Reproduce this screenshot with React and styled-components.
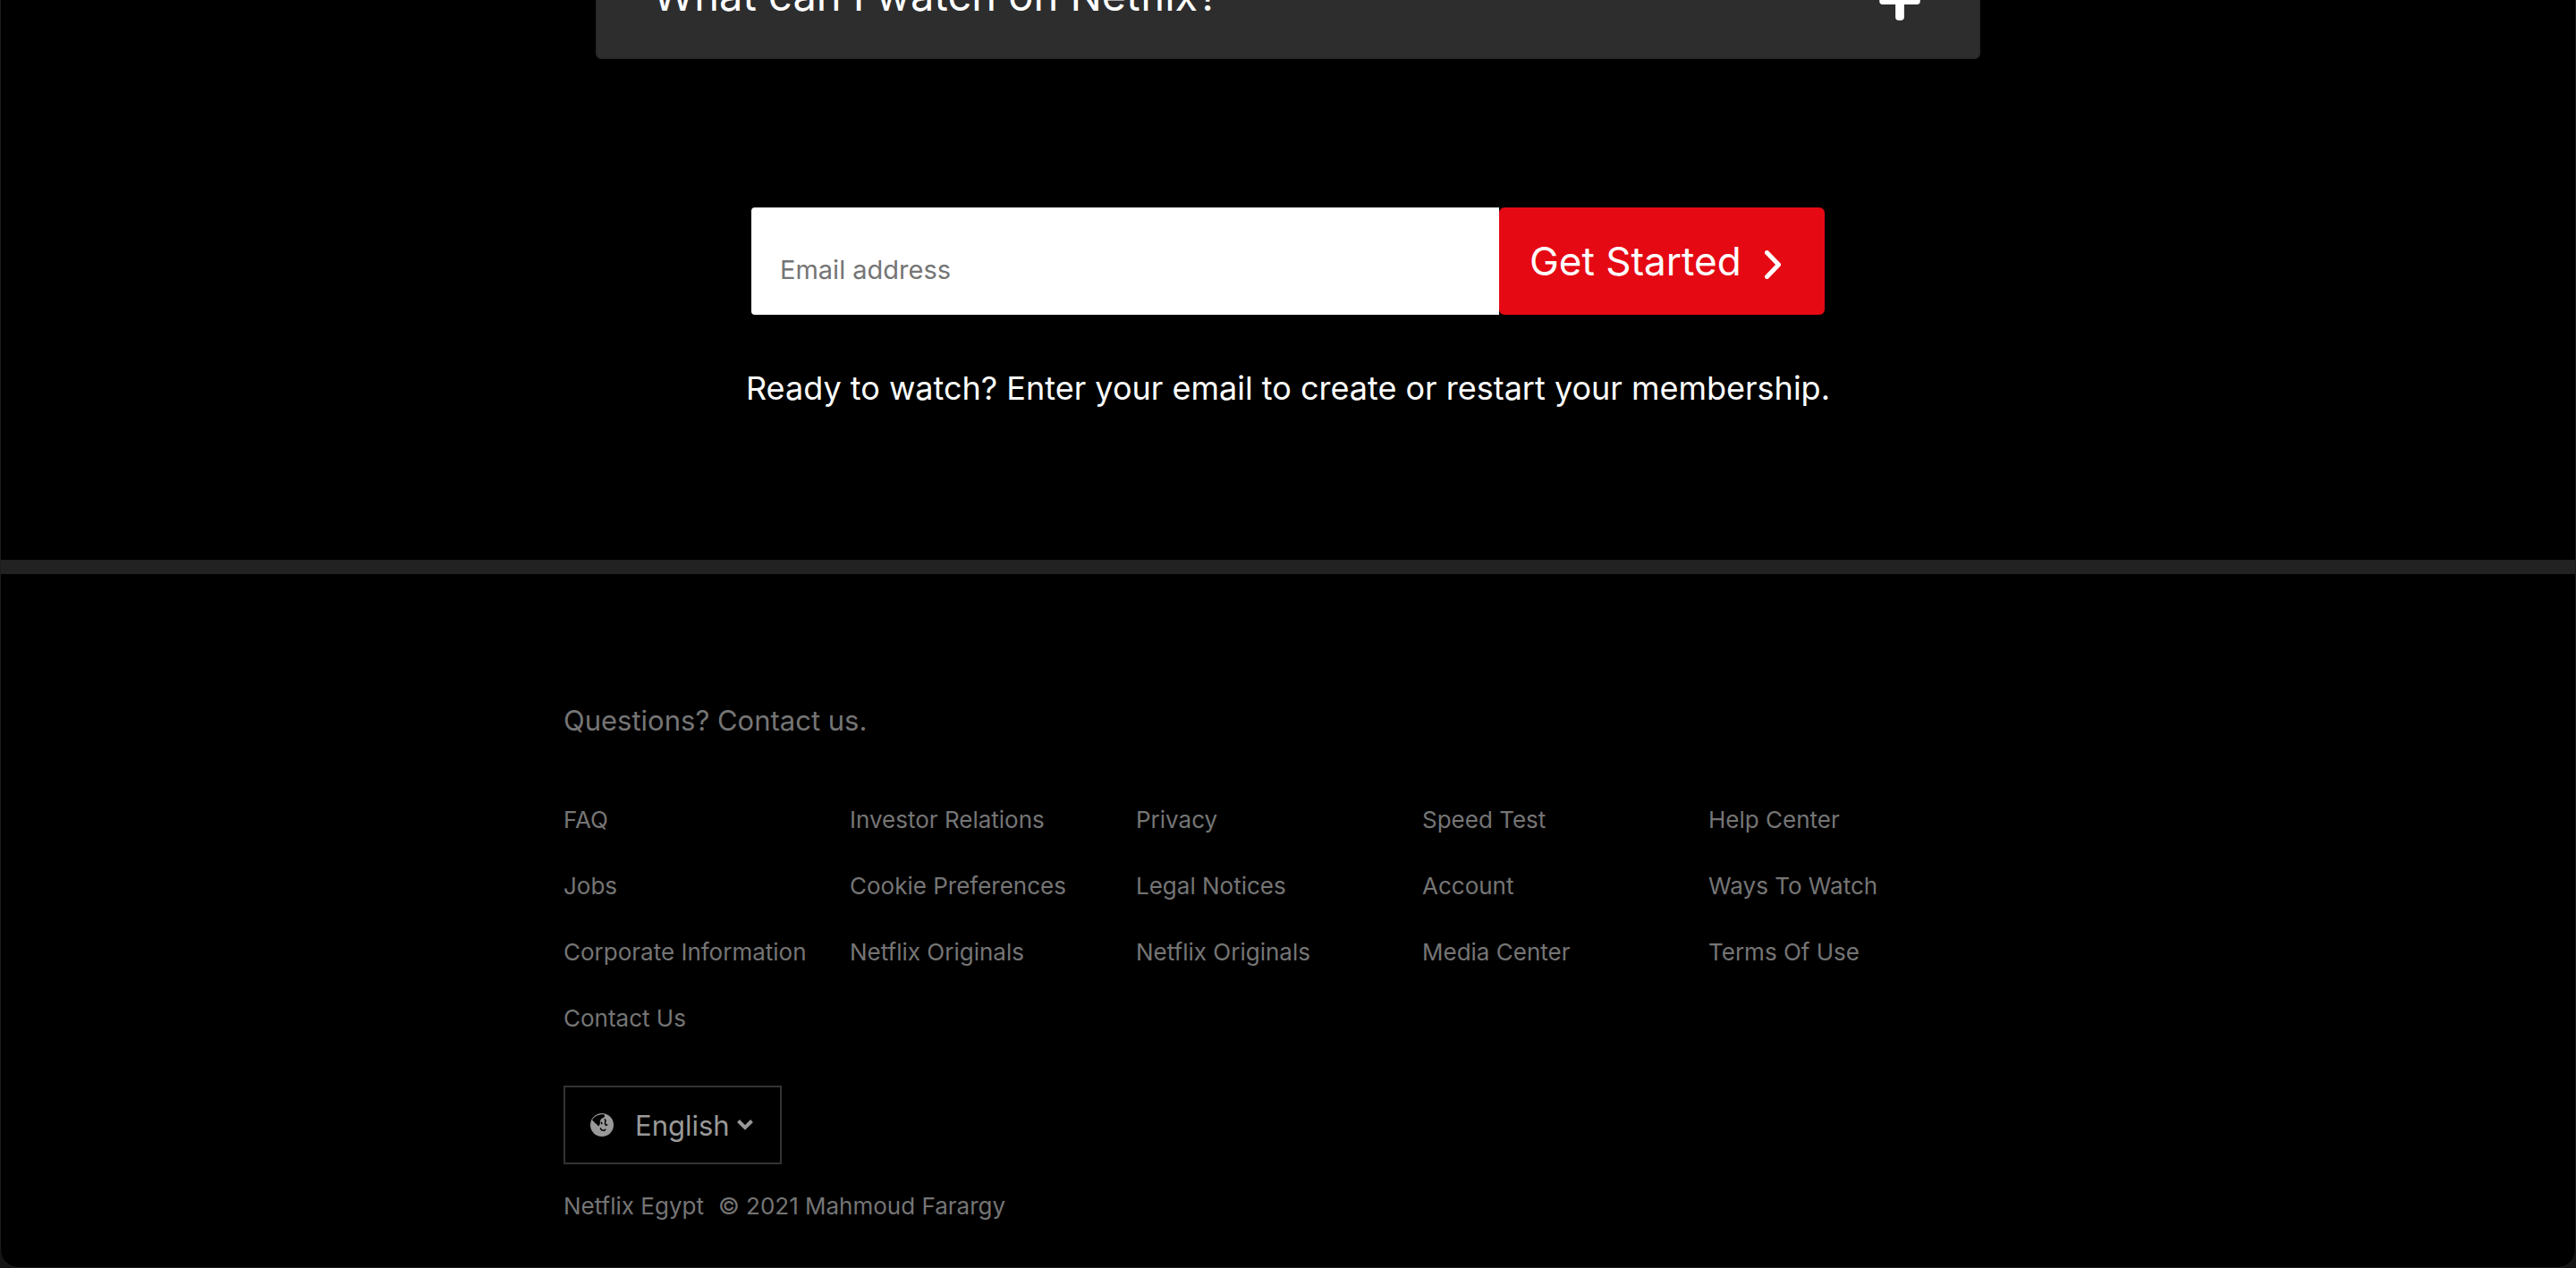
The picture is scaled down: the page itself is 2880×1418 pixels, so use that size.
import React from "react";
import styled, { createGlobalStyle } from "styled-components";
import { FaPlus } from "react-icons/fa";

const GlobalStyle = createGlobalStyle`
  *, *::before, *::after { box-sizing: border-box; }
  body {
    margin: 0;
    background: #141414;
    color: #fff;
    font-family: Inter, "Liberation Sans", sans-serif;
  }
`;

const Page = styled.div`
  min-height: 100vh;
  overflow: hidden;
  display: flex;
  flex-direction: column;
  background: #000;
  border: 1px solid #1c1c1c;
  border-top: 0;
  border-radius: 0 0 20px 20px;
`;

const FaqSection = styled.main`
  display: flex;
  flex-direction: column;
  align-items: center;
  justify-content: flex-end;
  height: 642px;
  padding-bottom: 166px;
  border-bottom: 16px solid #222;
`;

const Question = styled.button`
  flex: none;
  display: flex;
  align-items: center;
  justify-content: space-between;
  width: 1548px;
  max-width: 100%;
  height: 132px;
  margin-bottom: 166px;
  padding: 0 62px;
  border: 2px solid #292929;
  border-radius: 6px;
  background: #2d2d2d;
  color: #fff;
  font-family: inherit;
  font-size: 47px;
  line-height: 60px;
  text-align: left;
`;

const QuestionText = styled.span`
  padding-bottom: 10px;
`;

const SignUp = styled.form`
  width: 1200px;
  max-width: 100%;
  display: flex;
  flex-direction: column;
  align-items: center;
  gap: 56px;
`;

const Fields = styled.div`
  display: flex;
  width: 100%;
  height: 120px;
`;

const EmailInput = styled.input`
  flex: 1;
  min-width: 0;
  padding: 18px 32px 0;
  border: 0;
  border-radius: 4px 0 0 4px;
  background: #fff;
  color: #000;
  font-family: inherit;
  font-size: 29px;
  &::placeholder { color: #757575; opacity: 1; }
`;

const StartButton = styled.button`
  width: 364px;
  padding: 0 34px;
  border: 0;
  border-radius: 6px;
  background: #e50914;
  color: #fff;
  font-family: inherit;
  font-size: 44px;
  text-align: left;
  white-space: nowrap;

  svg {
    margin-left: 26px;
    vertical-align: middle;
  }
`;

const Prompt = styled.p`
  margin: 0;
  font-size: 36px;
  line-height: 52px;
  text-align: center;
  white-space: nowrap;
`;

const Footer = styled.footer`
  width: 1620px;
  max-width: 100%;
  margin: 0 auto;
  padding: 144px 0 40px;
  color: #757575;
  font-size: 26px;
  line-height: 34px;
`;

const ContactLine = styled.a`
  display: block;
  margin-bottom: 74px;
  color: inherit;
  font-size: 31px;
  line-height: 40px;
  text-decoration: none;
`;

const LinkGrid = styled.ul`
  display: grid;
  grid-template-columns: repeat(5, 320px);
  gap: 40px 0;
  margin: 0 0 58px;
  padding: 0;
  list-style: none;
`;

const FooterLink = styled.a`
  color: inherit;
  text-decoration: none;
`;

const Language = styled.label`
  display: flex;
  align-items: center;
  width: 244px;
  height: 88px;
  margin-bottom: 30px;
  padding: 0 30px 0 28px;
  border: 2px solid #333;
  color: #999;
`;

const LanguageSelect = styled.select`
  flex: 1;
  min-width: 0;
  height: 40px;
  padding: 0;
  margin-left: 24px;
  border: 0;
  appearance: none;
  background: transparent;
  color: inherit;
  font-family: inherit;
  font-size: 31px;
`;

const Copyright = styled.p`
  display: flex;
  gap: 16px;
  margin: 0;
`;

const links = [
  "FAQ", "Investor Relations", "Privacy", "Speed Test", "Help Center",
  "Jobs", "Cookie Preferences", "Legal Notices", "Account", "Ways To Watch",
  "Corporate Information", "Netflix Originals", "Netflix Originals", "Media Center", "Terms Of Use",
  "Contact Us",
];

const Chevron = () => (
  <svg width="18" height="32" viewBox="0 0 18 32" fill="none" stroke="currentColor" strokeWidth="5" strokeLinecap="round" strokeLinejoin="round" aria-hidden="true">
    <path d="M2.5 2.5 15.5 16 2.5 29.5" />
  </svg>
);

const Globe = () => (
  <svg width="26" height="26" viewBox="0 0 26 26" fill="none" aria-hidden="true">
    <circle cx="13" cy="13" r="13" fill="#999" />
    <path d="M2 7.6C4.2 3.6 8.6 1 15.6 1.3L16 3.4 15.4 4.6 12.4 6 11 8.2 10.8 11.4 9.6 14.2C8 14.6 7.8 12.4 6 11.6 4.6 10.4 3.6 8.8 2 7.6Z" fill="#000" />
    <path d="M15.8 6.4 17 8 16.4 11.4 17.4 13.4 19.4 12.6M12.2 9.6 13 12.2M11.2 16.4 12.6 18.8 15.6 19.2 17.2 17.8" stroke="#000" strokeWidth="1.5" />
  </svg>
);

const Caret = () => (
  <svg width="18" height="12" viewBox="0 0 18 12" fill="none" stroke="currentColor" strokeWidth="4" aria-hidden="true">
    <path d="M1.5 1.5 9 9 16.5 1.5" />
  </svg>
);

export default function App() {
  return (
    <>
      <GlobalStyle />
      <Page>
        <FaqSection>
          <Question type="button">
            <QuestionText>What can I watch on Netflix?</QuestionText>
            <FaPlus size={52} aria-hidden="true" />
          </Question>
          <SignUp onSubmit={(event) => event.preventDefault()}>
            <Fields>
              <EmailInput type="email" placeholder="Email address" aria-label="Email address" />
              <StartButton type="submit">
                Get Started
                <Chevron />
              </StartButton>
            </Fields>
            <Prompt>Ready to watch? Enter your email to create or restart your membership.</Prompt>
          </SignUp>
        </FaqSection>
        <Footer>
          <ContactLine href="#contact">Questions? Contact us.</ContactLine>
          <LinkGrid>
            {links.map((text, index) => (
              <li key={index}><FooterLink href="#footer">{text}</FooterLink></li>
            ))}
          </LinkGrid>
          <Language>
            <Globe />
            <LanguageSelect aria-label="Language" defaultValue="English">
              <option>English</option>
            </LanguageSelect>
            <Caret />
          </Language>
          <Copyright><span>Netflix Egypt</span><span>© 2021 Mahmoud Farargy</span></Copyright>
        </Footer>
      </Page>
    </>
  );
}
